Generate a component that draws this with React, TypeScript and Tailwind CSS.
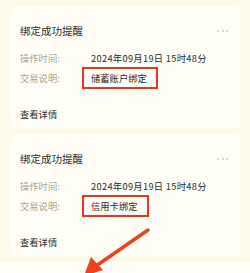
const cards = [
  { title: '绑定成功提醒', time: '2024年09月19日 15时48分', desc: '储蓄账户绑定' },
  { title: '绑定成功提醒', time: '2024年09月19日 15时48分', desc: '信用卡绑定' },
];

function NoticeCard({ title, time, desc }: { title: string; time: string; desc: string }) {
  return (
    <div className="mx-[10px] h-[122px] rounded-[6px] bg-[#fffff7] px-[10px] pt-[18px]">
      <div className="flex h-[14px] items-center justify-between">
        <span className="text-[10.5px] leading-[14px] text-[#2b2a26]">{title}</span>
        <span className="mr-[2px] flex gap-[2.5px]">
          <i className="block h-[2px] w-[2px] rounded-full bg-[#cfcbb6]" />
          <i className="block h-[2px] w-[2px] rounded-full bg-[#cfcbb6]" />
          <i className="block h-[2px] w-[2px] rounded-full bg-[#cfcbb6]" />
        </span>
      </div>
      <div className="mt-[14px] flex h-[12px] items-center text-[9.3px] leading-[12px]">
        <span className="w-[71px] text-[#aaa38b]">操作时间:</span>
        <span className="tracking-[0.3px] text-[#2b2a26]">{time}</span>
      </div>
      <div className="mt-[8px] flex h-[12px] items-center text-[9.3px] leading-[12px]">
        <span className="w-[71px] text-[#aaa38b]">交易说明:</span>
        <span className="-ml-[9px] flex h-[22px] items-center border-2 border-[#e8361f] pl-[7px] pr-[9px] text-[#2b2a26]">
          {desc}
        </span>
      </div>
      <div className="mt-[24px] flex h-[12px] items-center justify-between text-[9.3px] leading-[12px]">
        <span className="text-[#2b2a26]">查看详情</span>
        <span className="text-[8px] text-[#f1eedd]">›</span>
      </div>
    </div>
  );
}

export default function App() {
  return (
    <div
      className="relative h-[273px] w-[250px] overflow-hidden bg-[#fcfbea]"
      style={{ fontFamily: '"Noto Sans CJK SC", "Noto Sans", sans-serif' }}
    >
      <div className="flex flex-col gap-[6px] pt-[6px]">
        {cards.map((c, i) => (
          <NoticeCard key={i} {...c} />
        ))}
      </div>
      <div className="mt-[6px] h-[20px] bg-[#fffff6]" />

      {/* annotation arrow */}
      <svg className="absolute left-0 top-0" width="250" height="273" viewBox="0 0 250 273">
        <line x1="148" y1="230" x2="96" y2="266" stroke="#f2401f" strokeWidth="3.5" strokeLinecap="round" />
        <polygon points="84,276 91,257 103,270" fill="#f2401f" />
      </svg>
    </div>
  );
}
